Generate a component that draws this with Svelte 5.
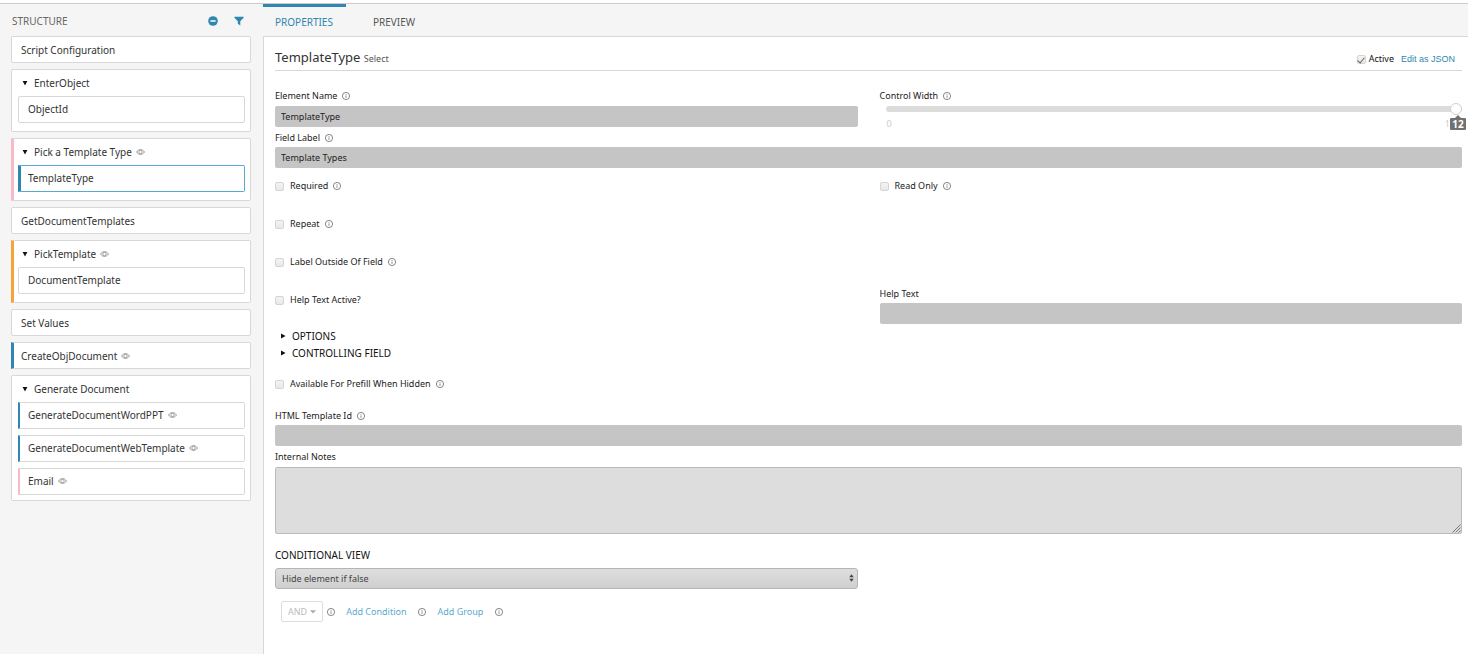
<script>
  const tree = [
    { name: 'Script Configuration' },
    { name: 'EnterObject', children: [{ name: 'ObjectId' }] },
    {
      name: 'Pick a Template Type',
      eye: true,
      accent: 'pink',
      children: [{ name: 'TemplateType', accent: 'blue', selected: true }]
    },
    { name: 'GetDocumentTemplates' },
    { name: 'PickTemplate', eye: true, accent: 'orange', children: [{ name: 'DocumentTemplate' }] },
    { name: 'Set Values' },
    { name: 'CreateObjDocument', eye: true, accent: 'blue' },
    {
      name: 'Generate Document',
      children: [
        { name: 'GenerateDocumentWordPPT', eye: true, accent: 'blue' },
        { name: 'GenerateDocumentWebTemplate', eye: true, accent: 'blue' },
        { name: 'Email', eye: true, accent: 'pink' }
      ]
    }
  ];

  let width = $state(12);
</script>

{#snippet eye()}
  <svg class="eye" viewBox="0 0 18 12" aria-hidden="true">
    <path d="M1 6C3 2.8 5.8 1.2 9 1.2S15 2.8 17 6C15 9.2 12.2 10.8 9 10.8S3 9.2 1 6Z" />
    <circle cx="9" cy="6" r="3.4" />
  </svg>
{/snippet}

{#snippet info()}
  <svg class="info" viewBox="0 0 16 16" aria-hidden="true">
    <circle cx="8" cy="8" r="7.2" />
    <path d="M8 7v4.6M8 4.2v1.5" />
  </svg>
{/snippet}

{#snippet check(id, text, hasInfo)}
  <div class="check">
    <input type="checkbox" {id} />
    <label for={id}>{text}</label>
    {#if hasInfo}{@render info()}{/if}
  </div>
{/snippet}

<div class="app">
  <aside>
    <header>
      <h2>STRUCTURE</h2>
      <button class="tool" aria-label="Collapse all">
        <svg viewBox="0 0 10 10"><circle cx="5" cy="5" r="4.8" /><path d="M2.4 5h5.2" stroke="#fff" stroke-width="1.5" /></svg>
      </button>
      <button class="tool" aria-label="Filter">
        <svg viewBox="0 0 10 10"><path d="M.4.8h9.2v1L6.3 5.2v4.4L3.8 7.8V5.2L.4 1.8Z" /></svg>
      </button>
    </header>
    <ul class="tree">
      {#each tree as node}
        <li class="node {node.accent ?? ''}" class:group={node.children} class:many={node.children?.length > 1}>
          <div class="row">
            {#if node.children}<svg class="caret" viewBox="0 0 6 6" aria-hidden="true"><path d="M.6 1h4.8L3 5.4Z" /></svg>{/if}
            <span>{node.name}</span>
            {#if node.eye}{@render eye()}{/if}
          </div>
          {#if node.children}
            <ul>
              {#each node.children as child}
                <li class="node {child.accent ?? ''}" class:selected={child.selected}>
                  <div class="row">
                    <span>{child.name}</span>
                    {#if child.eye}{@render eye()}{/if}
                  </div>
                </li>
              {/each}
            </ul>
          {/if}
        </li>
      {/each}
    </ul>
  </aside>

  <main>
    <nav>
      <a href="#properties" class="active">PROPERTIES</a>
      <a href="#preview">PREVIEW</a>
    </nav>
    <section class="panel">
      <div class="title">
        <h1>TemplateType <small>Select</small></h1>
        <div class="state">
          <input type="checkbox" id="active" checked />
          <label for="active">Active</label>
          <a href="#json">Edit as JSON</a>
        </div>
      </div>

      <div class="cols">
        <div class="field">
          <div class="label"><label for="name">Element Name</label>{@render info()}</div>
          <input type="text" id="name" value="TemplateType" />
        </div>
        <div class="field">
          <div class="label"><label for="width">Control Width</label>{@render info()}</div>
          <div class="slider">
            <input type="range" id="width" min="0" max="12" bind:value={width} />
            <div class="scale"><span>0</span><span>12</span></div>
            <output for="width">{width}</output>
          </div>
        </div>
      </div>
      <div class="field stacked">
        <div class="label"><label for="flabel">Field Label</label>{@render info()}</div>
        <input type="text" id="flabel" value="Template Types" />
      </div>

      <div class="checks">
        <div class="cols">
          {@render check('required', 'Required', true)}
          {@render check('readonly', 'Read Only', true)}
        </div>
        {@render check('repeat', 'Repeat', true)}
        {@render check('outside', 'Label Outside Of Field', true)}
        <div class="cols help">
          {@render check('helpactive', 'Help Text Active?', false)}
          <div class="field">
            <div class="label"><label for="help">Help Text</label></div>
            <input type="text" id="help" />
          </div>
        </div>
      </div>

      <div class="sections">
        <button><svg class="caret" viewBox="0 0 6 6"><path d="M1 .4v5.2L5.6 3Z" /></svg>OPTIONS</button>
        <button><svg class="caret" viewBox="0 0 6 6"><path d="M1 .4v5.2L5.6 3Z" /></svg>CONTROLLING FIELD</button>
      </div>

      {@render check('prefill', 'Available For Prefill When Hidden', true)}

      <div class="field stacked html">
        <div class="label"><label for="html">HTML Template Id</label>{@render info()}</div>
        <input type="text" id="html" />
      </div>
      <div class="field stacked">
        <div class="label"><label for="notes">Internal Notes</label></div>
        <div class="notes">
          <textarea id="notes"></textarea>
          <svg class="grip" viewBox="0 0 9 9" aria-hidden="true"><path d="M.5 8.5l8-8M3.5 8.5l5-5M6.5 8.5l2-2" /></svg>
        </div>
      </div>

      <label class="heading" for="view">CONDITIONAL VIEW</label>
      <div class="cols">
        <div class="select">
          <select id="view"><option>Hide element if false</option></select>
          <svg viewBox="0 0 5 8" aria-hidden="true"><path d="M.3 3.2h4.4L2.5.2ZM.3 4.8h4.4L2.5 7.8Z" /></svg>
        </div>
      </div>

      <div class="actions">
        <button class="and">AND <svg viewBox="0 0 6 4" aria-hidden="true"><path d="M0 .3h6L3 3.6Z" /></svg></button>
        {@render info()}
        <button class="link">Add Condition</button>
        {@render info()}
        <button class="link">Add Group</button>
        {@render info()}
      </div>
    </section>
  </main>
</div>

<style>
  :global(body) {
    background: #f5f5f5;
  }
  .app {
    display: grid;
    grid-template-columns: 263px minmax(0, 1fr);
    min-height: 100vh;
    box-sizing: border-box;
    border-top: 3px solid #fff;
    font: 9px/20px 'Noto Sans', sans-serif;
    color: #333;
    background: #f5f5f5;
  }
  .app :global(*) {
    box-sizing: border-box;
  }
  aside,
  nav {
    border-top: 1px solid #ccc;
  }
  button,
  input,
  select,
  textarea {
    font: inherit;
    color: inherit;
    margin: 0;
    padding: 0;
    border: 0;
    background: none;
  }
  ul {
    list-style: none;
    margin: 0;
    padding: 0;
    display: grid;
    gap: 6px;
  }
  h1,
  h2 {
    margin: 0;
    font-weight: 400;
  }
  a {
    color: #2f87b0;
    text-decoration: none;
  }
  svg {
    flex: none;
    display: block;
  }

  aside {
    padding: 0 12px 0 11px;
  }
  aside header {
    display: flex;
    align-items: center;
    gap: 16px;
    height: 32px;
    padding: 1px 7px 0 1px;
  }
  h2 {
    flex: 1;
    font-size: 10px;
    color: #666;
  }
  .tool svg {
    width: 10px;
    height: 10px;
    fill: #2f87b0;
  }
  .node {
    border: 1px solid #d8d8d8;
    border-radius: 2px;
    background: #fff;
    font-size: 10px;
  }
  .row {
    display: flex;
    align-items: center;
    height: 25px;
    padding: 0 9px;
  }
  .group > .row {
    padding-left: 10px;
  }
  .group > ul {
    padding: 1px 5px 8px 6px;
  }
  .group ul .row {
    padding-bottom: 2px;
  }
  .group.many > ul {
    padding-bottom: 5px;
  }
  .tree > .pink,
  .tree > .blue,
  .tree > .orange {
    border-left-width: 3px;
    border-radius: 0 2px 2px 0;
  }
  .tree > .node:is(.pink, .blue, .orange) > .row {
    padding-left: 7px;
  }
  .tree > .group:is(.pink, .orange) > .row {
    padding-left: 8px;
  }
  .tree > .group:is(.pink, .orange) > ul {
    padding-left: 4px;
  }
  .group .node:is(.pink, .blue) {
    border-left-width: 2px;
    border-radius: 0 2px 2px 0;
  }
  .group .node:is(.pink, .blue) .row {
    padding-left: 8px;
  }
  .selected {
    border-color: #57a9d6;
  }
  .pink {
    border-left-color: #f9b9c6;
  }
  .orange {
    border-left-color: #f6a336;
  }
  .blue {
    border-left-color: #2f87b0;
  }
  .group .node.selected {
    border-left-width: 3px;
  }
  .group .node.selected .row {
    padding-left: 7px;
  }
  .caret {
    width: 6px;
    height: 6px;
    fill: #111;
  }
  .row .caret {
    margin-right: 6px;
  }
  .eye {
    width: 9px;
    height: 6px;
    margin-left: 4px;
    fill: none;
    stroke: #666;
    stroke-width: 1.2;
  }
  .info {
    width: 8px;
    height: 8px;
    fill: none;
    stroke: #555;
    stroke-width: 1.4;
  }

  main {
    display: flex;
    flex-direction: column;
  }
  nav {
    display: flex;
    height: 33px;
    font-size: 10px;
  }
  nav a {
    padding: 8px 13px 0 12px;
    margin-right: 15px;
    color: #555;
  }
  nav a.active {
    padding-top: 5px;
    border-top: 3px solid #2f87b0;
    color: #2f87b0;
  }
  .panel {
    flex: 1;
    padding: 0 6px 32px 11px;
    border: 1px solid #d8d8d8;
    border-width: 1px 0 0 1px;
    background: #fff;
  }
  .title {
    display: flex;
    justify-content: space-between;
    align-items: flex-end;
    height: 34px;
    margin-bottom: 15px;
    border-bottom: 1px solid #d8d8d8;
  }
  h1 {
    align-self: flex-start;
    font-size: 13px;
    line-height: 40px;
  }
  small {
    font-size: 9px;
    color: #555;
  }
  .state {
    display: flex;
    align-items: center;
    gap: 3px;
    padding: 0 7px 1px 0;
    color: #111;
  }
  .state a {
    margin-left: 4px;
    font-family: 'Liberation Sans', sans-serif;
  }
  .cols {
    display: grid;
    grid-template-columns: 1fr 1fr;
    column-gap: 22px;
  }
  .label {
    display: flex;
    align-items: center;
    gap: 5px;
    height: 20px;
    color: #222;
  }
  .stacked .label,
  .help .label {
    padding-top: 2px;
  }
  input[type='text'] {
    display: block;
    width: 100%;
    height: 21px;
    padding: 0 6px;
    border-radius: 2px;
    background: #c5c5c5;
    color: #222;
  }
  input[type='checkbox'] {
    appearance: none;
    flex: none;
    display: grid;
    place-items: center;
    width: 9px;
    height: 9px;
    border: 1px solid #d4d4d4;
    border-radius: 2px;
    background: linear-gradient(#f4f4f4, #e8e8e8);
  }
  input[type='checkbox']:checked::after {
    content: '';
    width: 3px;
    height: 6px;
    margin-bottom: 2px;
    border: solid #666;
    border-width: 0 1px 1px 0;
    transform: rotate(40deg);
  }
  .slider {
    position: relative;
    height: 21px;
    padding-left: 6px;
  }
  input[type='range'] {
    appearance: none;
    display: block;
    width: 100%;
    height: 6px;
    border-radius: 3px;
    background: #dcdcdc;
  }
  input[type='range']::-webkit-slider-thumb {
    appearance: none;
    width: 12px;
    height: 12px;
    border: 1px solid #d0d0d0;
    border-radius: 50%;
    background: #fff;
  }
  .scale {
    display: flex;
    justify-content: space-between;
    height: 20px;
    padding: 1px 7px 0 1px;
    line-height: 22px;
    color: #ccc;
  }
  output {
    position: absolute;
    top: 12px;
    right: -4px;
    width: 16px;
    height: 12px;
    border-radius: 1px;
    background: #717171;
    color: #fff;
    font-size: 10px;
    font-weight: 700;
    line-height: 12px;
    text-align: center;
  }
  output::before {
    content: '';
    position: absolute;
    top: -3px;
    left: 5px;
    border: 3px solid transparent;
    border-top: 0;
    border-bottom-color: #717171;
  }
  .checks {
    display: grid;
    gap: 2px;
  }
  .check {
    display: flex;
    align-items: center;
    gap: 5px;
    height: 36px;
    color: #222;
  }
  .check input {
    margin-right: 1px;
  }
  .help .field {
    padding-top: 1px;
  }
  .sections {
    display: flex;
    flex-direction: column;
    align-items: flex-start;
    margin: 3px 0 5px;
  }
  .sections button {
    display: flex;
    align-items: center;
    gap: 6px;
    height: 17px;
    padding-left: 5px;
    font-size: 10px;
    color: #111;
  }
  .html {
    margin-top: 3px;
  }
  .notes {
    display: grid;
    padding-top: 1px;
  }
  textarea {
    grid-area: 1 / 1;
    width: 100%;
    height: 67px;
    padding: 4px 6px;
    border: 1px solid #bbb;
    border-radius: 2px;
    background: #ddd;
    resize: none;
  }
  .grip {
    grid-area: 1 / 1;
    place-self: end;
    width: 9px;
    height: 9px;
    margin: 1px;
    fill: none;
    stroke: #777;
    pointer-events: none;
  }
  .heading {
    display: block;
    margin-top: 8px;
    font-size: 10px;
    line-height: 26px;
    color: #111;
  }
  .select {
    display: grid;
    align-items: center;
  }
  select {
    grid-area: 1 / 1;
    appearance: none;
    width: 100%;
    height: 21px;
    padding: 0 6px 2px;
    border: 1px solid #b5b5b5;
    border-radius: 3px;
    background: linear-gradient(#dedede, #cfcfcf);
    color: #444;
  }
  .select svg {
    grid-area: 1 / 1;
    justify-self: end;
    width: 5px;
    height: 8px;
    margin: 0 4px 2px 0;
    fill: #444;
    pointer-events: none;
  }
  .actions {
    display: flex;
    align-items: center;
    margin-top: 12px;
    padding-left: 6px;
  }
  .and {
    display: flex;
    align-items: center;
    gap: 3px;
    height: 21px;
    margin-right: 4px;
    padding: 0 6px;
    border: 1px solid #ddd;
    border-radius: 2px;
    color: #bbb;
  }
  .and svg {
    width: 6px;
    height: 4px;
    fill: #aaa;
  }
  .link {
    margin: 0 12px 0 11px;
    color: #5aaace;
  }
</style>
